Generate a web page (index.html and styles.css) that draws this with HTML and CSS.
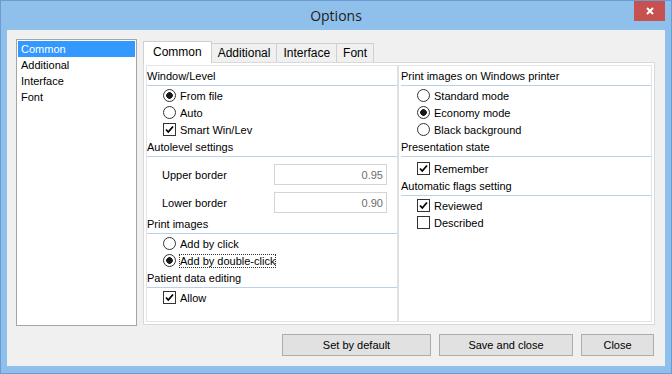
FILE: index.html
```html
<!DOCTYPE html>
<html lang="en">
<head>
  <meta charset="UTF-8" />
  <title>Options</title>
  <link rel="stylesheet" href="styles.css">
</head>
<body>

  <div class="window">
    <div class="titlebar">
      <span class="title">Options</span>
      <button class="close" aria-label="Close">
        <svg width="10" height="10" viewBox="0 0 10 10">
          <path d="M2 2 L8 8 M8 2 L2 8" stroke="#fff" stroke-width="2" fill="none" />
        </svg>
      </button>
    </div>

    <div class="client">
      <div class="main">
        <ul class="pages">
          <li class="selected">Common</li>
          <li>Additional</li>
          <li>Interface</li>
          <li>Font</li>
        </ul>

        <div class="tabs">
          <div class="tab-strip">
            <span class="tab active">Common</span>
            <span class="tab">Additional</span>
            <span class="tab">Interface</span>
            <span class="tab">Font</span>
          </div>

          <div class="tab-panel">
            <div class="tab-body">
              <div class="col">
                <div class="group-title">Window/Level</div>
                <div class="items">
                  <div class="opt"><span class="radio checked"></span>From file</div>
                  <div class="opt"><span class="radio"></span>Auto</div>
                  <div class="opt"><span class="check checked"></span>Smart Win/Lev</div>
                </div>

                <div class="group-title">Autolevel settings</div>
                <div class="fields">
                  <div class="field">
                    <label>Upper border</label>
                    <input type="text" value="0.95" disabled />
                  </div>
                  <div class="field">
                    <label>Lower border</label>
                    <input type="text" value="0.90" disabled />
                  </div>
                </div>

                <div class="group-title">Print images</div>
                <div class="items">
                  <div class="opt"><span class="radio"></span>Add by click</div>
                  <div class="opt"><span class="radio checked"></span><span class="focus">Add by double-click</span></div>
                </div>

                <div class="group-title">Patient data editing</div>
                <div class="items">
                  <div class="opt"><span class="check checked"></span>Allow</div>
                </div>
              </div>

              <div class="col right">
                <div class="group-title">Print images on Windows printer</div>
                <div class="items">
                  <div class="opt"><span class="radio"></span>Standard mode</div>
                  <div class="opt"><span class="radio checked"></span>Economy mode</div>
                  <div class="opt"><span class="radio"></span>Black background</div>
                </div>

                <div class="group-title">Presentation state</div>
                <div class="items loose">
                  <div class="opt"><span class="check checked"></span>Remember</div>
                </div>

                <div class="group-title">Automatic flags setting</div>
                <div class="items">
                  <div class="opt"><span class="check checked"></span>Reviewed</div>
                  <div class="opt"><span class="check"></span>Described</div>
                </div>
              </div>
            </div>
          </div>
        </div>
      </div>

      <div class="buttons">
        <button class="btn btn-default">Set by default</button>
        <button class="btn btn-save">Save and close</button>
        <button class="btn btn-close">Close</button>
      </div>
    </div>
  </div>

</body>
</html>
```

FILE: styles.css
```css
body {
  margin: 0;
  font-family: "Liberation Sans", Arial, sans-serif;
  font-size: 11px;
  color: #000;
}

.window {
  width: 672px;
  height: 374px;
  box-sizing: border-box;
  border: 1px solid #6b9bd2;
  background: #8fc0ec;
  display: flex;
  flex-direction: column;
}

.titlebar {
  height: 29px;
  position: relative;
  display: flex;
  align-items: center;
  justify-content: center;
}

.title {
  font-family: "Open Sans", "Noto Sans", sans-serif;
  font-size: 14px;
  color: #1c1c1c;
}

.close {
  position: absolute;
  top: 0;
  right: 6px;
  width: 31px;
  height: 20px;
  border: none;
  padding: 0;
  background: #c75050;
  display: flex;
  align-items: center;
  justify-content: center;
}

.client {
  flex: 1;
  margin: 0 6px 7px;
  background: #f0f0f0;
  padding: 9px 10px 10px 9px;
  display: flex;
  flex-direction: column;
}

.main {
  display: flex;
  gap: 6px;
  height: 287px;
}

/* left page list */
.pages {
  width: 121px;
  box-sizing: border-box;
  margin: 0;
  padding: 1px;
  list-style: none;
  background: #fff;
  border: 1px solid #a5a5a5;
}

.pages li {
  height: 16px;
  line-height: 16px;
  padding-left: 3px;
}

.pages li.selected {
  background: #3399ff;
  color: #fff;
}

/* tab control */
.tabs {
  flex: 1;
  margin-top: 2px;
  height: 284px;
  display: flex;
  flex-direction: column;
}

.tab-strip {
  display: flex;
  align-items: flex-end;
  height: 21px;
}

.tab {
  box-sizing: border-box;
  height: 19px;
  line-height: 18px;
  padding: 0 6px;
  margin-right: -1px;
  border: 1px solid #cfcfcf;
  border-bottom: none;
  background: #f0f0f0;
  font-size: 12px;
}

.tab.active {
  height: 22px;
  line-height: 21px;
  padding: 0 9px;
  margin-bottom: -1px;
  background: #fff;
  position: relative;
  z-index: 1;
}

.tab-panel {
  flex: 1;
  display: flex;
  padding: 2px;
  border: 1px solid #d9d9d9;
  background: #fff;
}

.tab-body {
  flex: 1;
  display: grid;
  grid-template-columns: 250px 1fr;
  border: 1px solid #e3e3e3;
}

.col {
  padding-top: 1px;
}

.col.right {
  border-left: 2px solid #e0e0e0;
  padding-left: 2px;
}

.group-title {
  height: 18px;
  line-height: 18px;
  border-bottom: 1px solid #b9d1ea;
}

.items {
  padding-top: 1px;
}

.items.loose {
  padding-top: 3px;
}

.opt {
  height: 17px;
  display: flex;
  align-items: center;
  gap: 4px;
  padding-left: 16px;
}

.radio, .check {
  box-sizing: border-box;
  width: 13px;
  height: 13px;
  border: 1px solid #333;
  background: #fff;
  flex: none;
}

.radio {
  border-radius: 50%;
}

.radio.checked {
  background: radial-gradient(circle, #1a1a1a 0, #1a1a1a 3px, #fff 3.6px);
}

.check.checked {
  background: #fff url("data:image/svg+xml;utf8,<svg xmlns='http://www.w3.org/2000/svg' width='11' height='11' viewBox='0 0 11 11'><path d='M2 5.5 L4.3 8 L9 2.5' stroke='black' stroke-width='1.8' fill='none'/></svg>") center no-repeat;
}

.focus {
  outline: 1px dotted #333;
}

.fields {
  padding: 7px 0 2px;
  display: flex;
  flex-direction: column;
  gap: 7px;
}

.field {
  display: flex;
  align-items: center;
  height: 21px;
}

.field label {
  flex: 0 0 127px;
  box-sizing: border-box;
  padding-left: 15px;
}

.field input {
  box-sizing: border-box;
  width: 113px;
  height: 21px;
  margin: 0;
  padding: 0 3px 0 0;
  border: 1px solid #d5d5d5;
  background: #fff;
  color: #6d6d6d;
  font-family: "Liberation Sans", Arial, sans-serif;
  font-size: 11px;
  text-align: right;
}

/* bottom buttons */
.buttons {
  display: flex;
  justify-content: flex-end;
  gap: 8px;
  margin-top: 8px;
  padding-right: 1px;
}

.btn {
  height: 22px;
  padding: 0;
  border: 1px solid #adadad;
  background: #e1e1e1;
  color: #000;
  font-family: "Liberation Sans", Arial, sans-serif;
  font-size: 11px;
}

.btn-default {
  width: 149px;
}

.btn-save {
  width: 134px;
}

.btn-close {
  width: 73px;
}
```
